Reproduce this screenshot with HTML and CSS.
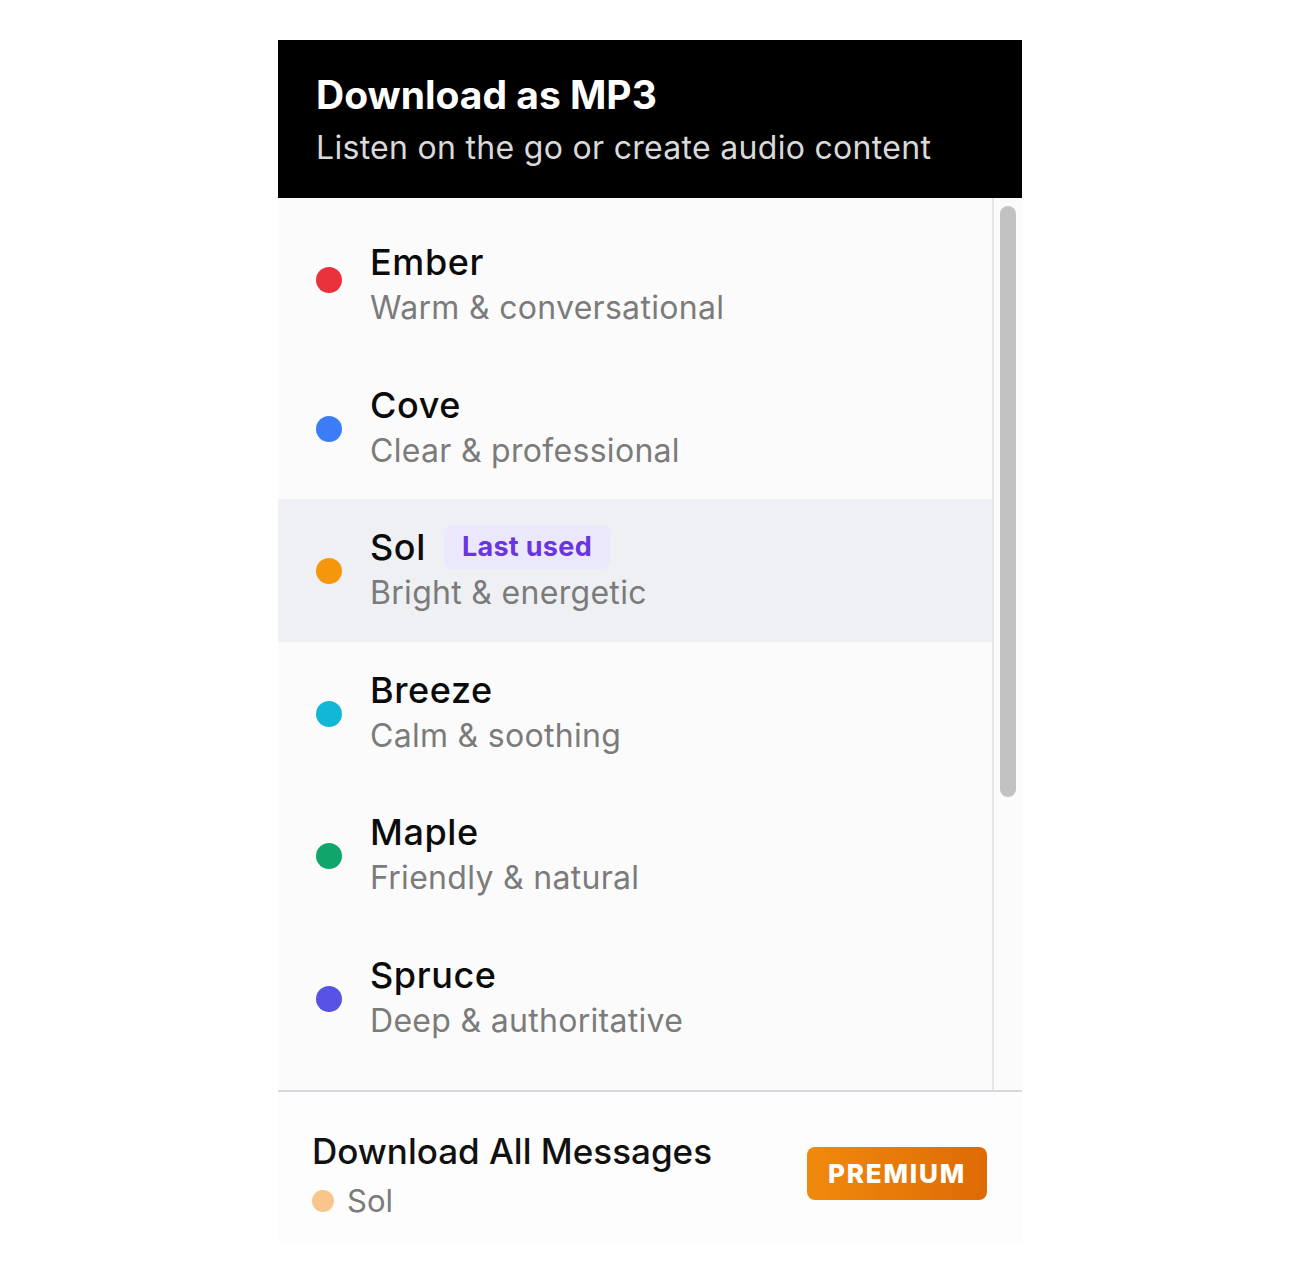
FILE: index.html
```html
<!DOCTYPE html>
<html lang="en">
<head>
<meta charset="utf-8">
<title>Download as MP3</title>
<link rel="stylesheet" href="styles.css">
</head>
<body>
<div class="panel">
  <header class="head">
    <h1 class="title">Download as MP3</h1>
    <p class="subtitle">Listen on the go or create audio content</p>
  </header>
  <div class="body">
    <ul class="list">
      <li class="row"><span class="dot ember"></span><div class="txt"><div class="name">Ember</div><div class="desc">Warm &amp; conversational</div></div></li>
      <li class="row"><span class="dot cove"></span><div class="txt"><div class="name">Cove</div><div class="desc">Clear &amp; professional</div></div></li>
      <li class="row active"><span class="dot sol"></span><div class="txt"><div class="name">Sol <span class="badge">Last used</span></div><div class="desc">Bright &amp; energetic</div></div></li>
      <li class="row"><span class="dot breeze"></span><div class="txt"><div class="name">Breeze</div><div class="desc">Calm &amp; soothing</div></div></li>
      <li class="row"><span class="dot maple"></span><div class="txt"><div class="name">Maple</div><div class="desc">Friendly &amp; natural</div></div></li>
      <li class="row"><span class="dot spruce"></span><div class="txt"><div class="name">Spruce</div><div class="desc">Deep &amp; authoritative</div></div></li>
    </ul>
    <div class="track"><div class="thumb"></div></div>
  </div>
  <footer class="foot">
    <div class="foot-txt">
      <div class="foot-title">Download All Messages</div>
      <div class="foot-sub"><span class="mini-dot"></span>Sol</div>
    </div>
    <button class="premium">PREMIUM</button>
  </footer>
</div>
</body>
</html>
```
FILE: styles.css
```css
* { box-sizing: border-box; }
body {
  margin: 0;
  background: #ffffff;
  font-family: Inter, "Noto Sans", "Liberation Sans", sans-serif;
}
.panel {
  width: 744px;
  margin: 40px 0 0 278px;
}
.head {
  background: #000;
  height: 158px;
  padding: 32px 38px 0;
}
.title {
  margin: 0;
  color: #fff;
  font-size: 39px;
  font-weight: 700;
  line-height: 46px;
  letter-spacing: 0;
}
.subtitle {
  margin: 11px 0 0;
  color: #d9d9d9;
  font-size: 32px;
  line-height: 38px;
  letter-spacing: 0.3px;
}
.body {
  display: flex;
  height: 892px;
  background: #fbfbfb;
}
.list {
  list-style: none;
  margin: 0;
  padding: 16px 0 0;
  width: 714px;
}
.row {
  height: 142.5px;
  display: flex;
  align-items: center;
  padding-left: 38px;
  gap: 28px;
}
.row.active { background: #eef0f3; }
.dot {
  width: 26px;
  height: 26px;
  border-radius: 50%;
  flex: none;
  margin-top: 2px;
}
.ember { background: #e8313a; margin-top: -10px; }
.cove { background: #3a7df6; }
.sol { background: #f6960c; }
.breeze { background: #12b6d6; }
.maple { background: #0fa56b; }
.spruce { background: #5752e4; }
.txt { display: flex; flex-direction: column; }
.name {
  font-size: 36px;
  line-height: 46px;
  color: #0b0b0b;
  font-weight: 500;
  letter-spacing: 0.6px;
  display: flex;
  align-items: center;
  gap: 18px;
}
.desc {
  font-size: 32px;
  line-height: 46px;
  color: #7b7b7b;
  letter-spacing: 0.3px;
}
.badge {
  background: #ebe8fb;
  color: #6a34e0;
  font-size: 27px;
  font-weight: 700;
  line-height: 44px;
  padding: 0 18px;
  border-radius: 8px;
  letter-spacing: 0.3px;
}
.track {
  width: 30px;
  border-left: 2px solid #e6e6e6;
  padding: 8px 0 0 6px;
}
.thumb {
  width: 16px;
  height: 591px;
  background: #c2c2c2;
  border-radius: 8px;
}
.foot {
  border-top: 2px solid #d5d9de;
  background: #fdfdfd;
  height: 152px;
  display: flex;
  align-items: center;
  justify-content: space-between;
  padding: 18px 35px 0 34px;
}
.foot-title {
  font-size: 35px;
  line-height: 46px;
  color: #111;
  font-weight: 500;
}
.foot-sub {
  display: flex;
  align-items: center;
  gap: 13px;
  font-size: 31px;
  line-height: 46px;
  color: #7b7b7b;
  margin-top: 4px;
}
.mini-dot {
  width: 22px;
  height: 22px;
  border-radius: 50%;
  background: #f9c58b;
}
.premium {
  width: 180px;
  height: 53px;
  border: none;
  border-radius: 8px;
  background: linear-gradient(90deg, #f08a0c, #de6a06);
  color: #fff;
  font-family: inherit;
  font-size: 26px;
  font-weight: 800;
  letter-spacing: 1.8px;
  margin-bottom: 6px;
}
```
